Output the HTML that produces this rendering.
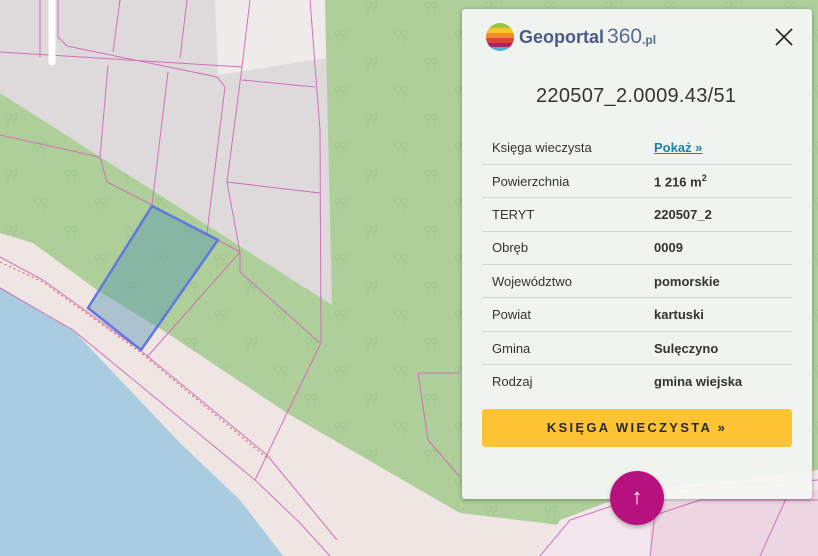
<!DOCTYPE html>
<html><head><meta charset="utf-8"><style>
*{margin:0;padding:0;box-sizing:border-box}
body{width:818px;height:556px;overflow:hidden;position:relative;font-family:"Liberation Sans",sans-serif;background:#aecf9a}
svg.map{position:absolute;left:0;top:0}
.panel{position:absolute;left:462px;top:9px;width:350px;height:490px;background:rgba(244,247,244,0.94);border-radius:3px;box-shadow:0 1px 4px rgba(0,0,0,.35)}
.logo{position:absolute;left:23px;top:13px;height:30px;display:flex;align-items:center}
.logo .t1{font-weight:bold;color:#4a5a8a;font-size:18px;margin-left:4px}
.logo .t2{color:#5a6a90;font-size:21px;font-weight:300;margin-left:3px}
.logo .t3{color:#5a6a90;font-size:12px;font-weight:bold;margin-top:6px}
.close{position:absolute;left:313px;top:19px}
.title{position:absolute;left:74px;top:76px;font-size:20px;color:#333;letter-spacing:.3px}
table{position:absolute;left:20px;top:122px;width:310px;border-collapse:collapse;font-size:13px;color:#333}
td{height:33.4px;border-bottom:1px solid #d0d4d0;padding-left:10px}
tr:last-child td{border-bottom:none}
td.v{font-weight:bold;padding-left:0;width:138px}
a{color:#1a80b0;text-decoration:underline}
.btn{position:absolute;left:20px;top:400px;width:310px;height:38px;background:#fdc334;border-radius:3px;text-align:center;line-height:38px;font-weight:bold;font-size:13px;letter-spacing:2.3px;color:#2a2a2a}
.fab{position:absolute;left:610px;top:471px;width:54px;height:54px;border-radius:50%;background:#b7117f;box-shadow:0 2px 4px rgba(0,0,0,.3);color:#fff;text-align:center;font-size:22px;line-height:52px}
</style></head><body>
<svg class="map" width="818" height="556" viewBox="0 0 818 556">
<defs>
<pattern id="tr" width="60" height="56" patternUnits="userSpaceOnUse">
<g fill="none" stroke="#9cc48e" stroke-width="0.8">
<path d="M8,8 a2.5,3 0 1 1 0.1,0 M8,9 v5 M14,8 a2.5,3 0 1 1 0.1,0 M14,9 v5"/>
<path d="M38,36 a2.5,3 0 1 1 0.1,0 M38,37 v5 M44,36 a2.5,3 0 1 1 0.1,0 M44,37 v5"/>
</g></pattern>
</defs>
<rect width="818" height="556" fill="#aecf9a"/>
<rect width="818" height="556" fill="url(#tr)"/>
<polygon points="0,0 325,0 332,305 0,93" fill="#dedadc"/>
<polygon points="215,0 325,0 326,58 218,75" fill="#efebea"/>
<polygon points="0,233 33,243 97,290 167,333 287,413 460,513 560,525 818,548 818,556 0,556" fill="#efe6e4"/>
<polygon points="0,287 73,330 180,443 240,500 283,556 0,556" fill="#aacce0"/>
<polygon points="560,520 640,490 818,470 818,556 540,556" fill="#f3e6ec"/>
<polygon points="650,505 818,490 818,556 650,556" fill="#ecd6e2"/>
<g fill="none" stroke="#d070b8" stroke-width="1">
<path d="M0,52 L242,67 M58,0 L58,37 L67,46 L217,77 L225,87 L207,233 M40,0 L40,57 M120,0 L113,52 M187,0 L180,58"/>
<path d="M250,0 L242,67 L227,182 L240,252 L240,272 L320,343 M310,0 L320,130 L321,343 L287,413 L255,480"/>
<path d="M0,135 L100,157 L107,182 L152,205 M108,65 L100,157 M168,72 L152,205 M227,182 L320,193 M242,80 L315,87 M240,252 L147,357 M218,240 L240,252"/>
<path d="M0,288 L73,330 L255,480 L300,523 L330,556 M0,257 L43,280 L140,350 L267,455 L337,540"/>
<path d="M418,373 L460,373 M418,373 L428,440 L460,477"/>
<path d="M540,556 L570,520 L660,490 L818,480 M650,556 L655,515 L700,500 L818,500 M760,556 L790,490"/>
</g>
<path d="M0,262 L43,282 L140,352 L267,458" fill="none" stroke="#e05050" stroke-width="1" stroke-dasharray="2,3"/>
<path d="M52,0 L52,62" stroke="#fff" stroke-width="7" stroke-linecap="round"/>
<polygon points="152,206 218,240 141,350 88,308" fill="rgba(90,150,180,0.45)" stroke="#6078e0" stroke-width="2.5" stroke-linejoin="round"/>
</svg>
<div class="panel">
<div class="logo">
<svg width="30" height="30" viewBox="0 0 30 30"><clipPath id="c"><circle cx="15" cy="15" r="14"/></clipPath><g clip-path="url(#c)"><rect y="0" width="30" height="6" fill="#9bc53d"/><rect y="6" width="30" height="5" fill="#f7c52b"/><rect y="11" width="30" height="5" fill="#f08a2c"/><rect y="16" width="30" height="5" fill="#e0403a"/><rect y="21" width="30" height="4" fill="#a0256a"/><rect y="25" width="30" height="5" fill="#4ab0d8"/></g></svg>
<span class="t1">Geoportal</span><span class="t2">360</span><span class="t3">.pl</span>
</div>
<svg class="close" width="18" height="18" viewBox="0 0 18 18"><path d="M1,1 L17,17 M17,1 L1,17" stroke="#222" stroke-width="1.6"/></svg>
<div class="title">220507_2.0009.43/51</div>
<table>
<tr><td>Księga wieczysta</td><td class="v"><a>Pokaż »</a></td></tr>
<tr><td>Powierzchnia</td><td class="v">1 216 m<sup style="font-size:9px">2</sup></td></tr>
<tr><td>TERYT</td><td class="v">220507_2</td></tr>
<tr><td>Obręb</td><td class="v">0009</td></tr>
<tr><td>Województwo</td><td class="v">pomorskie</td></tr>
<tr><td>Powiat</td><td class="v">kartuski</td></tr>
<tr><td>Gmina</td><td class="v">Sulęczyno</td></tr>
<tr><td>Rodzaj</td><td class="v">gmina wiejska</td></tr>
</table>
<div class="btn">KSIĘGA WIECZYSTA »</div>
</div>
<div class="fab">↑</div>
</body></html>
